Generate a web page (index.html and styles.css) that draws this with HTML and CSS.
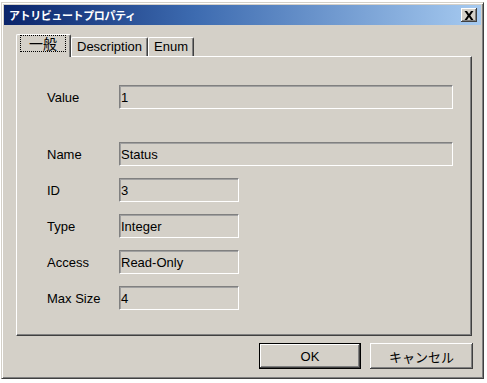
FILE: index.html
```html
<!DOCTYPE html>
<html lang="ja">
<head>
    <meta charset="UTF-8">
    <title>アトリビュートプロパティ</title>
    <link rel="stylesheet" href="styles.css">
</head>
<body>
    <div class="window">
        <div class="titlebar">
            <span class="title">アトリビュートプロパティ</span>
            <button class="close" type="button">
                <svg width="10" height="9" viewBox="0 0 10 9"><path d="M0.5 0h2.5l2 3 2-3h2.5l-3.2 4.5 3.2 4.5H7L5 6 3 9H0.5l3.2-4.5z" fill="#000"/></svg>
            </button>
        </div>
        <div class="content">
            <div class="tabs">
                <div class="tab active"><span class="focus">一般</span></div>
                <div class="tab">Description</div>
                <div class="tab">Enum</div>
            </div>
            <div class="panel">
                <div class="row first">
                    <span class="label">Value</span>
                    <div class="field wide">1</div>
                </div>
                <div class="row gap">
                    <span class="label">Name</span>
                    <div class="field wide">Status</div>
                </div>
                <div class="row">
                    <span class="label">ID</span>
                    <div class="field">3</div>
                </div>
                <div class="row">
                    <span class="label">Type</span>
                    <div class="field">Integer</div>
                </div>
                <div class="row">
                    <span class="label">Access</span>
                    <div class="field">Read-Only</div>
                </div>
                <div class="row">
                    <span class="label">Max Size</span>
                    <div class="field">4</div>
                </div>
            </div>
            <div class="buttons">
                <button class="btn default" type="button">OK</button>
                <button class="btn" type="button">キャンセル</button>
            </div>
        </div>
    </div>
</body>
</html>
```

FILE: styles.css
```css
body {
    margin: 0;
    background: #fff;
    font-family: "Liberation Sans", "Noto Sans CJK JP", sans-serif;
    font-size: 13px;
    color: #000;
}
.window {
    margin: 2px 0 0 1px;
    width: 483px;
    height: 377px;
    box-sizing: border-box;
    background: #d4d0c8;
    border-top: 1px solid #d4d0c8;
    border-left: 1px solid #d4d0c8;
    border-right: 1px solid #404040;
    border-bottom: 1px solid #404040;
    box-shadow: inset 1px 1px 0 #fff, inset -1px -1px 0 #808080;
    padding: 2px;
}
.titlebar {
    height: 20px;
    display: flex;
    align-items: center;
    justify-content: space-between;
    padding: 0 4px 0 5px;
    background: linear-gradient(to right, #0a246a, #3d6bb0 40%, #a6caf0);
}
.title {
    color: #fff;
    font-family: "Noto Sans CJK JP", sans-serif;
    font-weight: bold;
    font-size: 11px;
    letter-spacing: -0.4px;
}
.close {
    width: 16px;
    height: 14px;
    padding: 0;
    display: flex;
    align-items: center;
    justify-content: center;
    background: #d4d0c8;
    border: none;
    box-shadow: inset -1px -1px 0 #404040, inset 1px 1px 0 #fff, inset -2px -2px 0 #808080;
}
.content {
    padding: 10px 8px 0 12px;
}
.tabs {
    display: flex;
    align-items: flex-end;
    height: 21px;
}
.tab {
    height: 18px;
    padding: 0 5px;
    line-height: 18px;
    border-top: 1px solid #fff;
    border-left: 1px solid #fff;
    border-right: 1px solid #404040;
    box-shadow: inset -1px 0 0 #808080;
    border-radius: 2px 2px 0 0;
}
.tab.active {
    height: 22px;
    padding: 0 4px 0 3px;
    line-height: 20px;
    position: relative;
    z-index: 1;
    margin-bottom: -1px;
    background: #d4d0c8;
}
.tab.active .focus {
    display: inline-block;
    font-family: "Noto Sans CJK JP", sans-serif;
    font-size: 14px;
    line-height: 15px;
    padding: 0 8px;
    border: 1px dotted #000;
}
.panel {
    width: 456px;
    height: 280px;
    box-sizing: border-box;
    border-top: 1px solid #fff;
    border-left: 1px solid #fff;
    border-right: 1px solid #404040;
    border-bottom: 1px solid #404040;
    box-shadow: inset -1px -1px 0 #808080;
    padding: 28px 0 0 30px;
}
.row {
    display: flex;
    align-items: center;
    margin-top: 12px;
}
.row.first {
    margin-top: 0;
}
.row.gap {
    margin-top: 33px;
}
.label {
    width: 72px;
}
.field {
    width: 120px;
    height: 24px;
    box-sizing: border-box;
    line-height: 23px;
    padding: 0 1px;
    border-top: 1px solid #808080;
    border-left: 1px solid #808080;
    border-right: 1px solid #fff;
    border-bottom: 1px solid #fff;
    box-shadow: inset 1px 1px 0 #a0a0a0;
}
.field.wide {
    width: 334px;
}
.buttons {
    display: flex;
    justify-content: flex-end;
    gap: 9px;
    margin-top: 7px;
}
.btn {
    width: 103px;
    height: 26px;
    padding: 0;
    font-family: "Liberation Sans", "Noto Sans CJK JP", sans-serif;
    font-size: 13px;
    background: #d4d0c8;
    border: none;
    box-shadow: inset -1px -1px 0 #404040, inset 1px 1px 0 #fff, inset -2px -2px 0 #808080;
}
.btn.default {
    width: 102px;
    border: 1px solid #000;
}
```
